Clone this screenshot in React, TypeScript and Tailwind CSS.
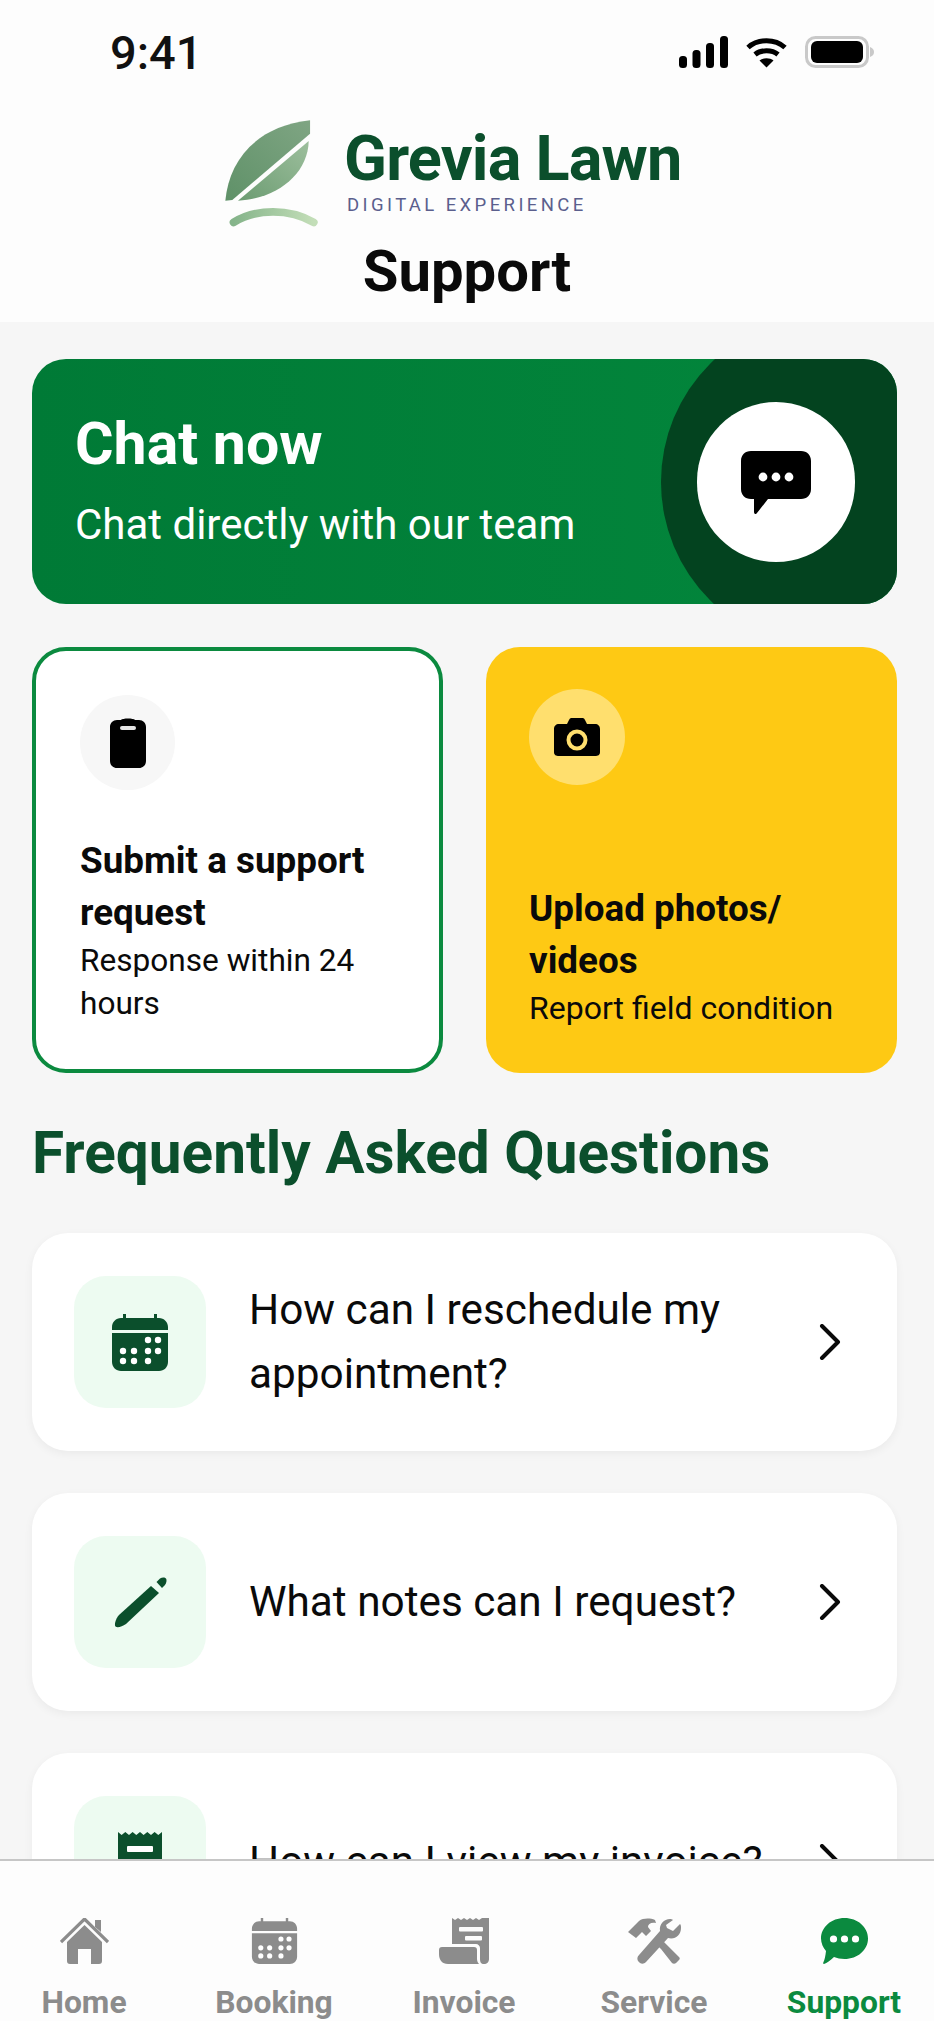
import React from "react";

const Leaf = () => (
  <svg width="98" height="113" viewBox="40 20 295 340" className="shrink-0">
    <defs>
      <linearGradient id="lf1" x1="0" y1="1" x2="1" y2="0">
        <stop offset="0" stopColor="#5f9168" />
        <stop offset="1" stopColor="#7fa583" />
      </linearGradient>
      <linearGradient id="lf2" x1="0" y1="1" x2="1" y2="0">
        <stop offset="0" stopColor="#6c9c72" />
        <stop offset="1" stopColor="#9dbf9d" />
      </linearGradient>
      <linearGradient id="lf3" x1="0" y1="0" x2="1" y2="0">
        <stop offset="0" stopColor="#85b48a" />
        <stop offset="1" stopColor="#c3deb8" />
      </linearGradient>
    </defs>
    <path d="M47 272C58 150 140 48 302 30L302 70L68 270Z" fill="url(#lf1)" />
    <path d="M85 272L298 92C296 190 205 265 85 272Z" fill="url(#lf2)" />
    <path d="M72 337C140 295 240 295 313 337" fill="none" stroke="url(#lf3)" strokeWidth="24" strokeLinecap="round" />
  </svg>
);

const Status = () => (
  <div className="flex h-[117px] shrink-0 items-start justify-between pl-[110px] pr-[60px] pt-[36px]">
    <span className="text-[47px] font-medium leading-[34px] text-[#111]">9:41</span>
    <div className="flex items-center">
      <svg width="49" height="32" viewBox="0 0 49 32" fill="#000">
        <rect x="0" y="20" width="8" height="12" rx="3.5" />
        <rect x="13.5" y="14" width="8" height="18" rx="3.5" />
        <rect x="27" y="7" width="8" height="25" rx="3.5" />
        <rect x="41" y="0" width="8" height="32" rx="3.5" />
      </svg>
      <svg width="41" height="32" viewBox="0 0 41 32" className="ml-[18px]" fill="none" stroke="#000" strokeWidth="5">
        <path d="M2 11.5C12 2.5 29 2.5 39 11.5" />
        <path d="M9 18.5C15 13.5 26 13.5 32 18.5" />
        <path d="M20.5 31.5L13.5 24.5C17 21.5 24 21.5 27.5 24.5Z" fill="#000" stroke="none" />
      </svg>
      <svg width="69" height="32" viewBox="0 0 69 32" className="ml-[18px]">
        <rect x="1.5" y="1.5" width="61" height="29" rx="9" fill="none" stroke="#c9c9c9" strokeWidth="3" />
        <rect x="6" y="5" width="52" height="22" rx="6" fill="#000" />
        <path d="M65 11C68 12 69 14 69 16C69 18 68 20 65 21Z" fill="#c9c9c9" />
      </svg>
    </div>
  </div>
);

const Header = () => (
  <header className="flex h-[322px] shrink-0 flex-col bg-[#fdfdfd]">
    <Status />
    <div className="flex h-[113px] shrink-0 pl-[223px]">
      <Leaf />
      <div className="ml-[23px] flex flex-col pt-[10px]">
        <span className="whitespace-nowrap text-[63px] font-bold leading-[64px] tracking-[-0.8px] text-[#0b4f2c]">Grevia Lawn</span>
        <span className="ml-[3px] mt-[4px] whitespace-nowrap text-[18.5px] font-normal leading-[20px] tracking-[3.4px] text-[#5b5f8d]">DIGITAL EXPERIENCE</span>
      </div>
    </div>
    <h1 className="mt-[8px] text-center text-[58px] font-bold leading-[66px] text-[#0a0a0a]">Support</h1>
  </header>
);

const ChatBubble = ({ className }: { className?: string }) => (
  <svg viewBox="0 0 70 64" className={className}>
    <path d="M10 0H60C66 0 70 4 70 10V38C70 44 66 48 60 48H27L16 62C15 64 13 63 13 61V48H10C4 48 0 44 0 38V10C0 4 4 0 10 0Z" fill="#000" />
    <circle cx="22" cy="26" r="4.4" fill="#fff" />
    <circle cx="35" cy="26" r="4.4" fill="#fff" />
    <circle cx="48" cy="26" r="4.4" fill="#fff" />
  </svg>
);

const ChatCard = () => (
  <section className="relative flex h-[245px] shrink-0 items-center overflow-hidden rounded-[34px] bg-gradient-to-r from-[#007a36] to-[#03873c] pl-[43px] text-white">
    <div className="absolute left-[629px] top-[-44px] h-[334px] w-[334px] rounded-full bg-[#03431f]" />
    <div className="absolute left-[665px] top-[43px] flex h-[160px] w-[158px] items-center justify-center rounded-full bg-white">
      <ChatBubble className="mt-[2px] h-[64px] w-[70px]" />
    </div>
    <div className="relative mt-[-2px]">
      <div className="text-[59px] font-bold leading-[68px]">Chat now</div>
      <div className="mt-[21px] text-[42px] font-normal leading-[52px]">Chat directly with our team</div>
    </div>
  </section>
);

const ActionCards = () => (
  <section className="mt-[43px] grid h-[426px] shrink-0 grid-cols-2 gap-[43px]">
    <div className="flex flex-col justify-between rounded-[34px] border-[4px] border-[#0b8a3f] bg-white pb-[44px] pl-[44px] pr-[20px] pt-[44px]">
      <div className="flex h-[95px] w-[95px] items-center justify-center rounded-full bg-[#f7f7f7]">
        <svg width="36" height="50" viewBox="0 0 36 50">
          <path d="M7 2H11C12 0 24 0 25 2H29C33 2 36 5 36 9V43C36 47 33 50 29 50H7C3 50 0 47 0 43V9C0 5 3 2 7 2Z" fill="#000" />
          <rect x="10" y="8" width="16" height="4" rx="2" fill="#e5e5e5" />
        </svg>
      </div>
      <div>
        <div className="text-[36.8px] font-bold leading-[52px] text-[#0a0a0a]">Submit a support request</div>
        <div className="text-[31.6px] font-normal leading-[43px] text-[#0a0a0a]">Response within 24 hours</div>
      </div>
    </div>
    <div className="flex flex-col justify-between rounded-[34px] bg-[#fec914] pb-[43px] pl-[43px] pr-[20px] pt-[42px]">
      <div className="flex h-[96px] w-[96px] items-center justify-center rounded-full bg-[#ffdf6e]">
        <svg width="46" height="38" viewBox="0 0 46 38">
          <path d="M5 6H13L15 2C16 0 17 0 18 0H28C29 0 30 0 31 2L33 6H41C44 6 46 8 46 11V34C46 37 44 38 41 38H5C2 38 0 37 0 34V11C0 8 2 6 5 6Z" fill="#000" />
          <circle cx="23" cy="22" r="8.5" fill="none" stroke="#ffdf6e" strokeWidth="4" />
        </svg>
      </div>
      <div>
        <div className="text-[36.8px] font-bold leading-[52px] text-[#0a0a0a]">Upload photos/ videos</div>
        <div className="text-[32px] font-normal leading-[43px] text-[#0a0a0a]">Report field condition</div>
      </div>
    </div>
  </section>
);

const CalendarIcon = ({ color, w, h }: { color: string; w: number; h: number }) => (
  <svg width={w} height={h} viewBox="0 0 56 57">
    <path d="M11 0H14V4H42V0H45V4H47C52 4 56 8 56 13V16H0V13C0 8 4 4 9 4H11Z" fill={color} />
    <path d="M0 19H56V48C56 53 52 57 47 57H9C4 57 0 53 0 48V19Z" fill={color} />
    {[[38, 27], [48, 27], [13, 38], [24, 38], [38, 38], [48, 38], [13, 48], [24, 48], [38, 48]].map(([x, y]) => (
      <circle key={`${x}-${y}`} cx={x - 2} cy={y - 1} r="3.2" fill="#fff" />
    ))}
  </svg>
);

const PencilIcon = () => (
  <svg width="53" height="51" viewBox="0 0 53 51" fill="none">
    <path d="M37 9L45 16L12 47C8 50 3 51 1.5 49.5C0 48 1.5 42 5 38Z" fill="#0b4f2c" />
    <path d="M42.5 5L46 1.5C48 0 51 0 52 1.5C53 3 52.5 6 51 8L48 11Z" fill="#0b4f2c" />
  </svg>
);

const ReceiptIcon = () => (
  <svg width="44" height="60" viewBox="0 0 44 60">
    <path d="M0 0L3.6 3L7.3 0L11 3L14.6 0L18.3 3L22 0L25.6 3L29.3 0L33 3L36.6 0L40.3 3L44 0V60H0Z" fill="#0b4f2c" />
    <rect x="9" y="14" width="26" height="6" rx="1" fill="#fff" />
    <rect x="9" y="27" width="26" height="6" rx="1" fill="#fff" />
  </svg>
);

const Faq = ({ icon, children }: { icon: React.ReactNode; children: React.ReactNode }) => (
  <div className="flex h-[218px] shrink-0 items-center rounded-[36px] bg-white pl-[42px] pr-[56px] shadow-[0_3px_10px_rgba(0,0,0,0.05)]">
    <div className="flex h-[132px] w-[132px] shrink-0 items-center justify-center rounded-[32px] bg-[#edfbf1]">{icon}</div>
    <div className="ml-[43px] flex-1 text-[42.3px] font-normal leading-[64px] text-[#0a0a0a]">{children}</div>
    <svg width="22" height="36" viewBox="0 0 22 36" fill="none" stroke="#0a0a0a" strokeWidth="4" strokeLinecap="round" strokeLinejoin="round" className="shrink-0">
      <path d="M3 2L19 18L3 34" />
    </svg>
  </div>
);

const nav = [
  {
    label: "Home",
    icon: (
      <svg width="49" height="46" viewBox="0 0 49 46" fill="#8c8c8c">
        <path d="M35 2H41V14L35 9Z" />
        <path d="M1 24L24.5 1L48 24" fill="none" stroke="#8c8c8c" strokeWidth="3.2" />
        <path d="M24.5 7L42 24V43C42 45 41 46 39 46H31V31H18V46H10C8 46 7 45 7 43V24Z" />
      </svg>
    ),
  },
  { label: "Booking", icon: <CalendarIcon color="#8c8c8c" w={47} h={46} /> },
  {
    label: "Invoice",
    icon: (
      <svg width="50" height="46" viewBox="0 0 50 46" fill="#8c8c8c">
        <path d="M13 0L16 2L19 0L22 2L25 0L28 2L31 0L34 2L37 0L40 2L43 0L50 0V41C50 44 48 46 45 46C42 46 41 44 41 41V30C41 28 39 26 37 26H13Z" />
        <rect x="20" y="9" width="24" height="4.5" rx="1" fill="#fdfdfd" />
        <rect x="26" y="18" width="17" height="4.5" rx="1" fill="#fdfdfd" />
        <path d="M3 29H35C37 29 38 30 38 32V41C38 43 39 45 40 46H9C3 46 0 42 0 36V32C0 30 1 29 3 29Z" />
      </svg>
    ),
  },
  {
    label: "Service",
    icon: (
      <svg width="53" height="46" viewBox="0 0 53 46" fill="#8c8c8c">
        <path d="M0 14L11 3C15 0 22 0 27 2L28 5C23 4 20 6 20 9L23 13L18 18L14 14L8 20Z" />
        <path d="M27 25L33 31L44 45C45 46 47 46 48 45L51 42C52 41 52 40 51 39L36 24L32 21Z" />
        <path d="M42 1C36 1 31 6 32 13L11 37C9 39 9 41 10 43L12 45C14 46 16 46 18 44L40 20C47 22 53 17 53 10C53 8 53 7 52 6L45 13L39 10L38 7L45 2C44 1 43 1 42 1Z" />
      </svg>
    ),
  },
  {
    label: "Support",
    active: true,
    icon: (
      <svg width="47" height="46" viewBox="0 0 47 46">
        <path d="M23.5 0C36.5 0 47 9 47 20.5C47 32 36.5 41 23.5 41C19.5 41 16 40 13 39C9 42.5 6 45 3 46C2 46 2 45 2.5 44C3.5 42 4.5 38 5 33C2 29.5 0 25 0 20.5C0 9 10.5 0 23.5 0Z" fill="#0b8a3f" />
        <circle cx="12.5" cy="21" r="3.6" fill="#fff" />
        <circle cx="23.5" cy="21" r="3.6" fill="#fff" />
        <circle cx="34.5" cy="21" r="3.6" fill="#fff" />
      </svg>
    ),
  },
];

const BottomNav = () => (
  <nav className="h-[162px] shrink-0 overflow-hidden border-t-[2px] border-[#c6c6c6] bg-[#fdfdfd]">
    <div className="ml-[-11px] grid w-[950px] grid-cols-5 pt-[57px]">
      {nav.map((n) => (
        <div key={n.label} className="flex flex-col items-center">
          <div className="flex h-[46px] items-center justify-center">{n.icon}</div>
          <span className={`mt-[18px] text-[31.8px] font-bold leading-[40px] ${n.active ? "text-[#0b8a3f]" : "text-[#8c8c8c]"}`}>{n.label}</span>
        </div>
      ))}
    </div>
  </nav>
);

export default function App() {
  return (
    <div className="flex h-[2021px] w-[934px] flex-col overflow-hidden bg-[#f6f6f6] font-['Roboto',sans-serif]">
      <Header />
      <main className="flex min-h-0 flex-1 flex-col overflow-hidden pl-[32px] pr-[37px] pt-[37px]">
        <ChatCard />
        <ActionCards />
        <h2 className="mt-[44px] shrink-0 whitespace-nowrap text-[58.5px] font-bold leading-[72px] text-[#0b4f2c]">Frequently Asked Questions</h2>
        <div className="mt-[44px] flex shrink-0 flex-col gap-[42px]">
          <Faq icon={<CalendarIcon color="#0b4f2c" w={56} h={57} />}>How can I reschedule my appointment?</Faq>
          <Faq icon={<PencilIcon />}>What notes can I request?</Faq>
          <Faq icon={<ReceiptIcon />}>How can I view my invoice?</Faq>
        </div>
      </main>
      <BottomNav />
    </div>
  );
}
